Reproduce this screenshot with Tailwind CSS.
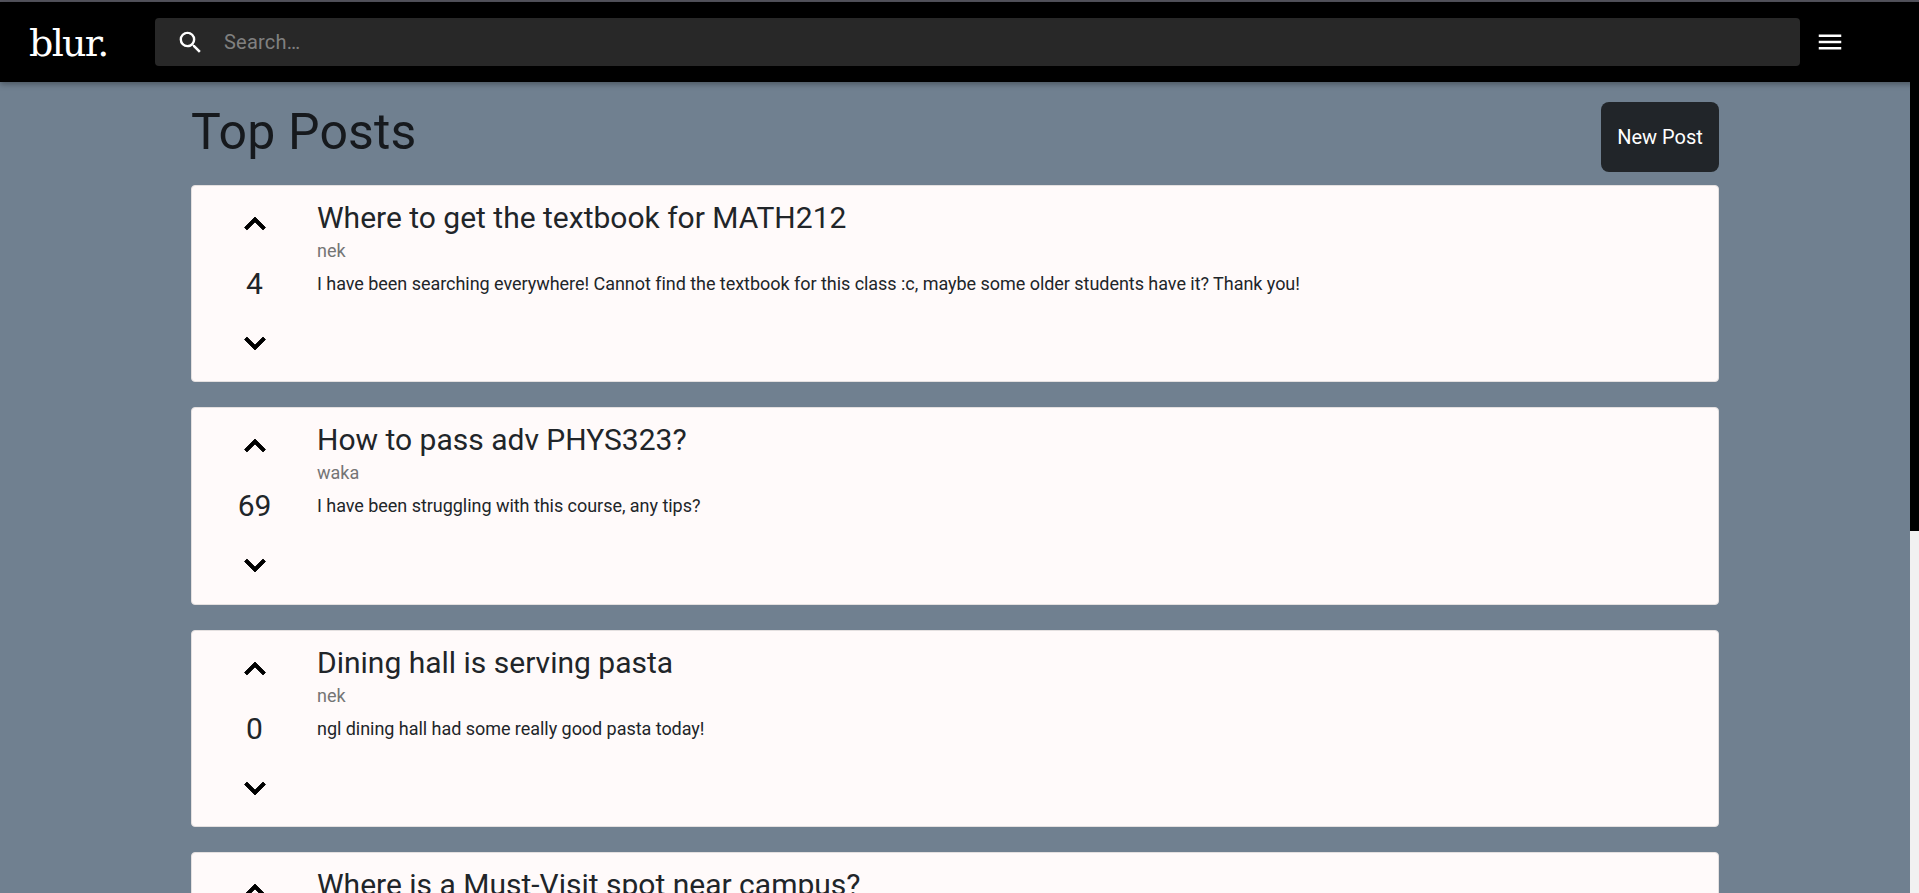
<!DOCTYPE html>
<html lang="en">
  <head>
    <meta charset="UTF-8" />
    <title>blur.</title>
    <script src="https://cdn.jsdelivr.net/npm/@tailwindcss/browser@4"></script>
  </head>
  <body class="h-screen overflow-hidden bg-[#708090] font-['Roboto',sans-serif] flex flex-col">
    <div class="h-[2px] bg-[#55555f] shrink-0"></div>
    <nav class="h-[80px] shrink-0 bg-black flex items-center relative z-10 shadow-[0_2px_6px_rgba(0,0,0,0.35)]">
      <a class="w-[155px] pl-[29px] pt-[2px] text-white text-[38px] font-light font-['DejaVu_Serif',serif] tracking-[-1.7px]">blur.</a>
      <div class="w-[1645px] h-[48px] bg-[#282828] rounded flex items-center pl-[21px]">
        <svg class="w-[29px] h-[29px] fill-white" viewBox="0 0 24 24"><path d="M15.5 14h-.79l-.28-.27A6.47 6.47 0 0 0 16 9.5 6.5 6.5 0 1 0 9.5 16c1.61 0 3.09-.59 4.23-1.57l.27.28v.79l5 4.99L20.49 19l-4.99-5zm-6 0C7.01 14 5 11.99 5 9.5S7.01 5 9.5 5 14 7.01 14 9.5 11.99 14 9.5 14z"/></svg>
        <span class="ml-[19px] text-[20px] tracking-[0.2px] text-[#808080]">Search…</span>
      </div>
      <svg class="ml-[15px] w-[30px] h-[30px] fill-white" viewBox="0 0 24 24"><path d="M3 18h18v-2H3v2zm0-5h18v-2H3v2zm0-7v2h18V6H3z"/></svg>
    </nav>
    <div class="flex flex-1 min-h-0">
      <main class="flex-1 min-w-0 overflow-hidden px-[191px]">
        <div class="flex justify-between items-start pt-[20px] h-[103px]">
          <h1 class="mt-[1px] text-[50px] leading-[58px] font-normal tracking-[0.15px] text-[#16191d]">Top Posts</h1>
          <button class="w-[118px] h-[70px] bg-[#212529] text-white text-[20px] rounded-lg">New Post</button>
        </div>
        <div class="flex flex-col gap-[25px]">
          <article class="h-[197.33px] shrink-0 bg-[#fffafa] rounded border border-[#e4e0e0] flex">
            <div class="w-[125px] shrink-0 flex flex-col items-center pt-[17px]">
              <svg class="w-[42px] h-[42px] stroke-black stroke-[0.5]" viewBox="0 0 24 24"><path d="M7.41 15.41 12 10.83l4.59 4.58L18 14l-6-6-6 6z"/></svg>
              <span class="mt-[21px] text-[30px] leading-[36px] text-[#212529]">4</span>
              <svg class="mt-[20px] w-[42px] h-[42px] stroke-black stroke-[0.5]" viewBox="0 0 24 24"><path d="M7.41 8.59 12 13.17l4.59-4.58L18 10l-6 6-6-6z"/></svg>
            </div>
            <div class="pt-[14px]">
              <h2 class="text-[30px] leading-[36px] font-normal text-[#212529]">Where to get the textbook for MATH212</h2>
              <p class="mt-[5px] text-[18px] leading-[20px] text-[#757575]">nek</p>
              <p class="mt-[11px] text-[18px] leading-[24px] tracking-[-0.04px] text-[#212529]">I have been searching everywhere! Cannot find the textbook for this class :c, maybe some older students have it? Thank you!</p>
            </div>
          </article>
          <article class="h-[197.33px] shrink-0 bg-[#fffafa] rounded border border-[#e4e0e0] flex">
            <div class="w-[125px] shrink-0 flex flex-col items-center pt-[17px]">
              <svg class="w-[42px] h-[42px] stroke-black stroke-[0.5]" viewBox="0 0 24 24"><path d="M7.41 15.41 12 10.83l4.59 4.58L18 14l-6-6-6 6z"/></svg>
              <span class="mt-[21px] text-[30px] leading-[36px] text-[#212529]">69</span>
              <svg class="mt-[20px] w-[42px] h-[42px] stroke-black stroke-[0.5]" viewBox="0 0 24 24"><path d="M7.41 8.59 12 13.17l4.59-4.58L18 10l-6 6-6-6z"/></svg>
            </div>
            <div class="pt-[14px]">
              <h2 class="text-[30px] leading-[36px] font-normal text-[#212529]">How to pass adv PHYS323?</h2>
              <p class="mt-[5px] text-[18px] leading-[20px] text-[#757575]">waka</p>
              <p class="mt-[11px] text-[18px] leading-[24px] tracking-[-0.04px] text-[#212529]">I have been struggling with this course, any tips?</p>
            </div>
          </article>
          <article class="h-[197.33px] shrink-0 bg-[#fffafa] rounded border border-[#e4e0e0] flex">
            <div class="w-[125px] shrink-0 flex flex-col items-center pt-[17px]">
              <svg class="w-[42px] h-[42px] stroke-black stroke-[0.5]" viewBox="0 0 24 24"><path d="M7.41 15.41 12 10.83l4.59 4.58L18 14l-6-6-6 6z"/></svg>
              <span class="mt-[21px] text-[30px] leading-[36px] text-[#212529]">0</span>
              <svg class="mt-[20px] w-[42px] h-[42px] stroke-black stroke-[0.5]" viewBox="0 0 24 24"><path d="M7.41 8.59 12 13.17l4.59-4.58L18 10l-6 6-6-6z"/></svg>
            </div>
            <div class="pt-[14px]">
              <h2 class="text-[30px] leading-[36px] font-normal text-[#212529]">Dining hall is serving pasta</h2>
              <p class="mt-[5px] text-[18px] leading-[20px] text-[#757575]">nek</p>
              <p class="mt-[11px] text-[18px] leading-[24px] tracking-[-0.04px] text-[#212529]">ngl dining hall had some really good pasta today!</p>
            </div>
          </article>
          <article class="h-[197.33px] shrink-0 bg-[#fffafa] rounded border border-[#e4e0e0] flex">
            <div class="w-[125px] shrink-0 flex flex-col items-center pt-[17px]">
              <svg class="w-[42px] h-[42px] stroke-black stroke-[0.5]" viewBox="0 0 24 24"><path d="M7.41 15.41 12 10.83l4.59 4.58L18 14l-6-6-6 6z"/></svg>
            </div>
            <div class="pt-[14px]">
              <h2 class="text-[30px] leading-[36px] font-normal text-[#212529]">Where is a Must-Visit spot near campus?</h2>
            </div>
          </article>
        </div>
      </main>
      <div class="w-[9px] shrink-0 bg-[#f1f1f1]">
        <div class="h-[449px] bg-black"></div>
      </div>
    </div>
  </body>
</html>
